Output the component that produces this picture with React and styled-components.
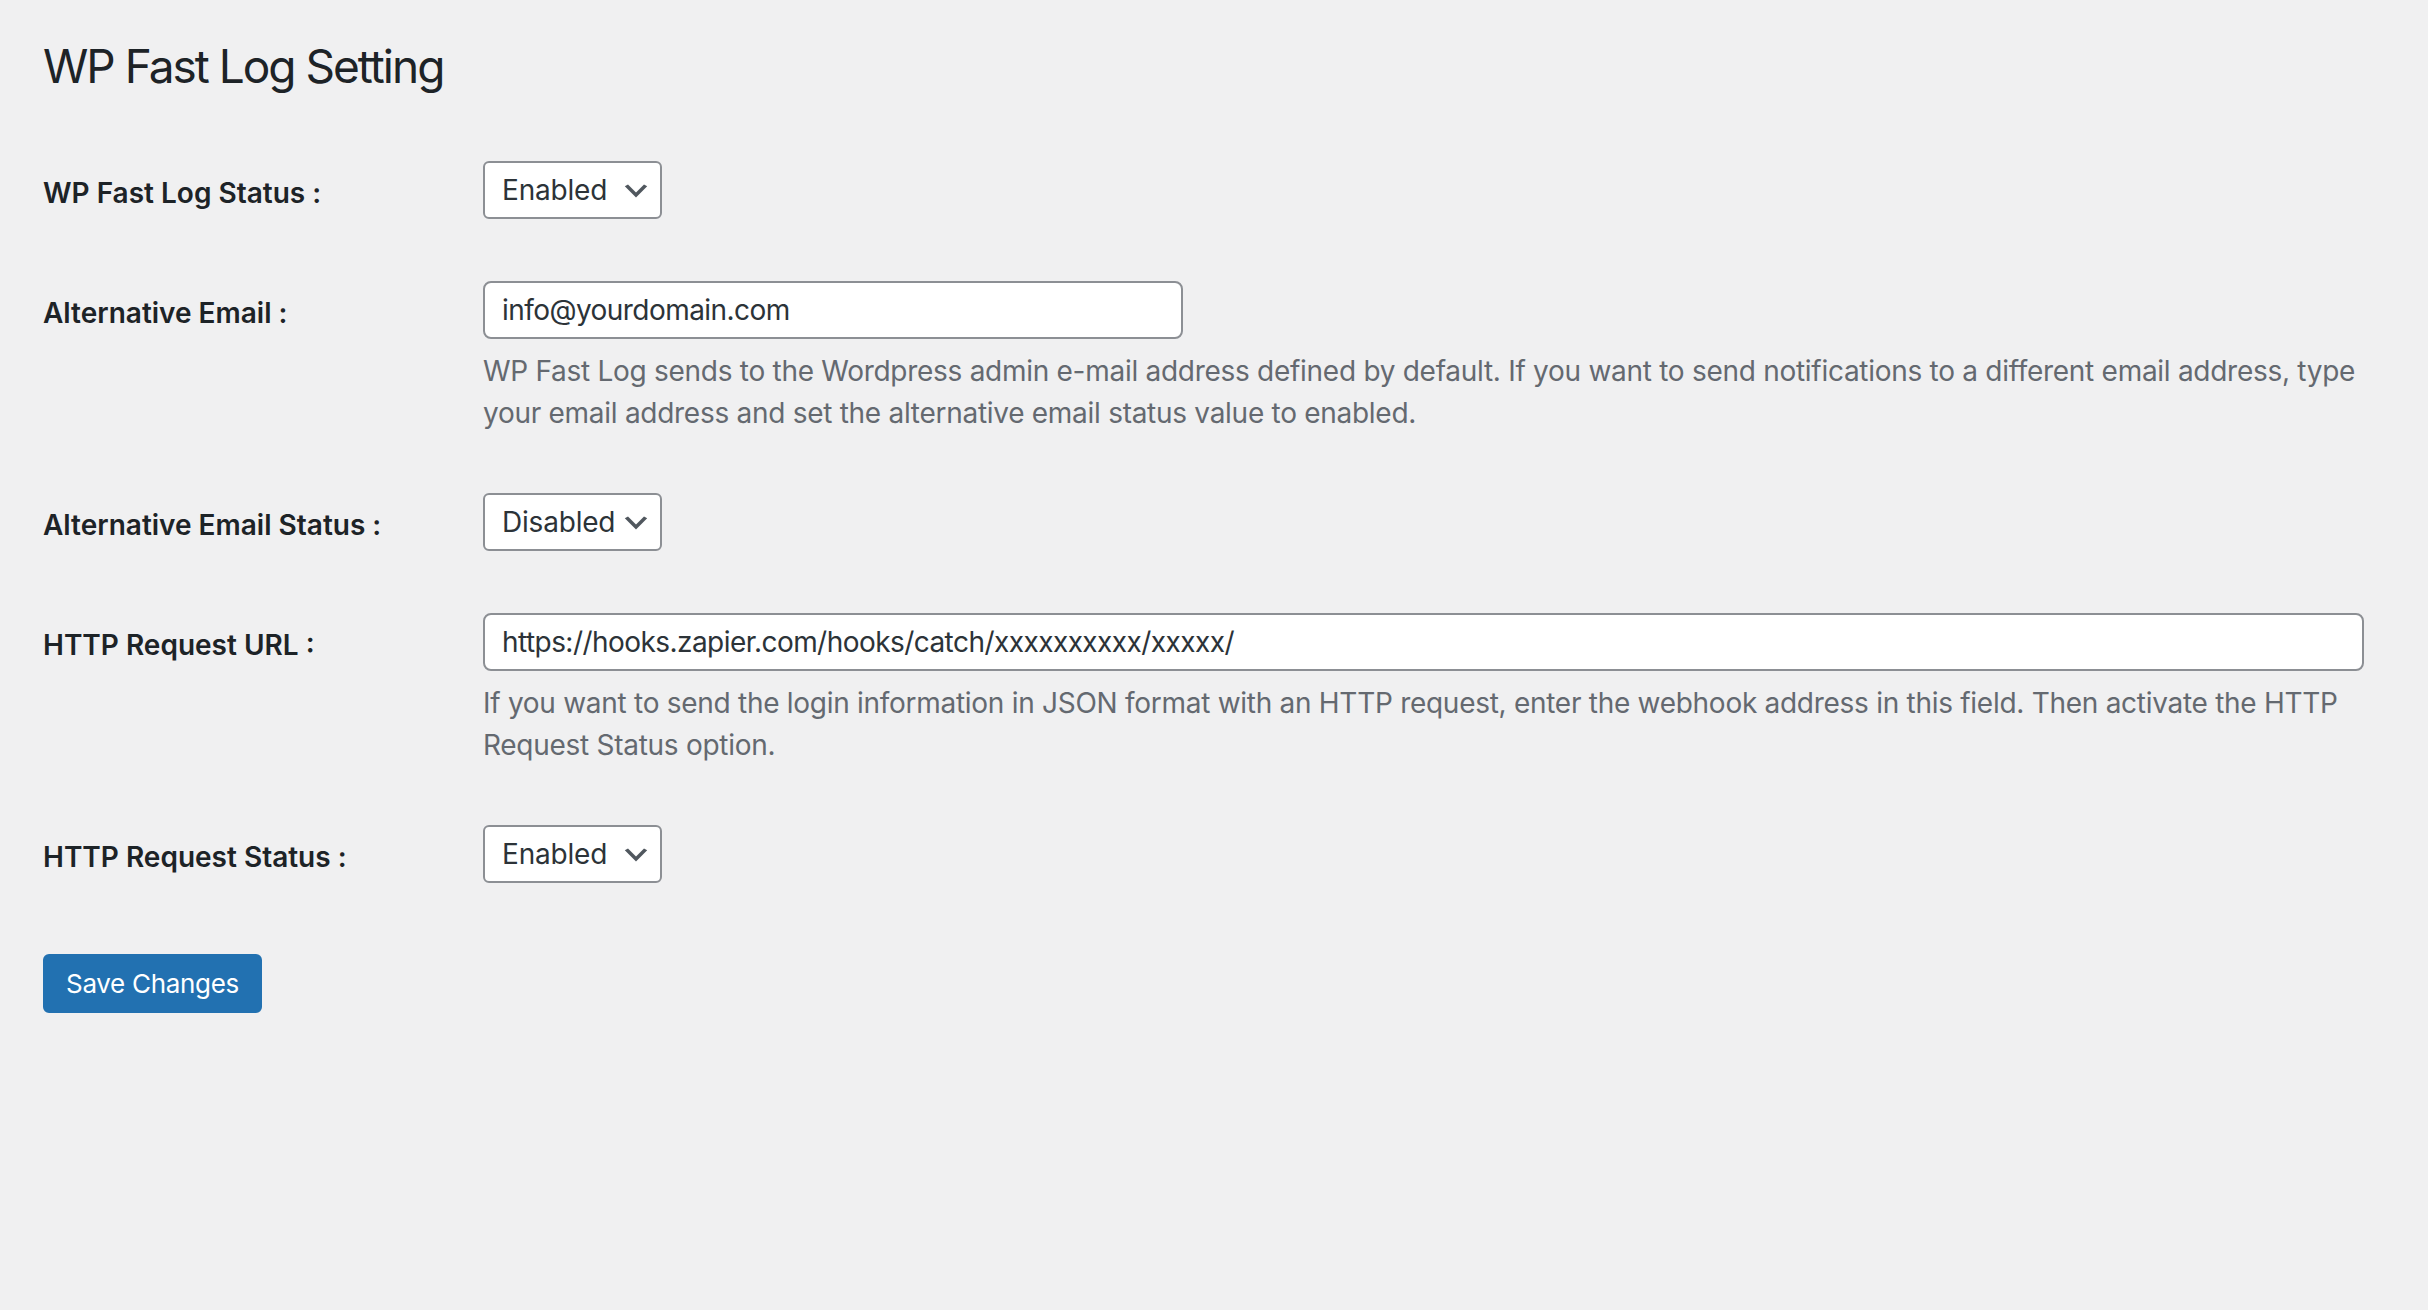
import React from 'react';
import styled, { createGlobalStyle } from 'styled-components';

const GlobalStyle = createGlobalStyle`
  html, body {
    margin: 0;
    padding: 0;
    background: #f0f0f1;
    min-height: 100%;
  }
  body {
    font-family: Inter, "Noto Sans", "Liberation Sans", sans-serif;
    color: #1d2327;
  }
`;

const Wrap = styled.div`
  padding: 37px 25px 0 43px;
  min-height: 1310px;
  box-sizing: border-box;
`;

const PageTitle = styled.h1`
  margin: 0 0 33px;
  font-size: 46px;
  font-weight: 400;
  line-height: 1.3;
  color: #1d2327;
  letter-spacing: -2px;
`;

const FormTable = styled.div`
  display: flex;
  flex-direction: column;
`;

const Row = styled.div`
  display: grid;
  grid-template-columns: 440px 1fr;
`;

const Label = styled.label`
  padding: 45px 40px 0 0;
  font-size: 28px;
  font-weight: 600;
  line-height: 1.3;
  color: #1d2327;
`;

const Field = styled.div`
  padding: 31px 20px 31px 0;
  min-width: 0;
`;

const SelectBox = styled.div`
  display: flex;
  align-items: center;
  justify-content: space-between;
  box-sizing: border-box;
  width: 179px;
  height: 58px;
  padding: 0 8px 0 17px;
  background: #fff;
  border: 2px solid #8c8f94;
  border-radius: 6px;
  font-size: 28px;
  letter-spacing: -0.2px;
  color: #2c3338;
  cursor: pointer;

  svg {
    flex: none;
    width: 32px;
    height: 32px;
    margin-top: 3px;
  }
`;

const TextInput = styled.input`
  display: block;
  box-sizing: border-box;
  width: ${({ $wide }) => ($wide ? '99%' : '700px')};
  height: 58px;
  margin: 0;
  padding: 0 17px;
  background: #fff;
  border: 2px solid #8c8f94;
  border-radius: 8px;
  font-family: inherit;
  font-size: 28px;
  letter-spacing: -0.55px;
  color: #2c3338;
  outline: none;
`;

const Description = styled.p`
  margin: 11px 0 -3px;
  font-size: 28px;
  line-height: 1.5;
  letter-spacing: -0.28px;
  color: #646970;
`;

const Submit = styled.div`
  padding-top: 40px;
`;

const PrimaryButton = styled.button`
  height: 59px;
  padding: 0 21px;
  background: #2271b1;
  border: 2px solid #2271b1;
  border-radius: 6px;
  color: #fff;
  font-family: inherit;
  font-size: 26px;
  font-weight: 400;
  letter-spacing: -0.3px;
  cursor: pointer;
`;

const Chevron = () => (
  <svg viewBox="0 0 20 20" aria-hidden="true">
    <path d="M5 6l5 5 5-5 2 1-7 7-7-7 2-1z" fill="#50575e" />
  </svg>
);

const Select = ({ value }) => (
  <SelectBox role="combobox">
    <span>{value}</span>
    <Chevron />
  </SelectBox>
);

const SettingRow = ({ label, children }) => (
  <Row>
    <Label>{label}</Label>
    <Field>{children}</Field>
  </Row>
);

export default function App() {
  return (
    <Wrap>
      <GlobalStyle />
      <PageTitle>WP Fast Log Setting</PageTitle>
      <FormTable>
        <SettingRow label="WP Fast Log Status :">
          <Select value="Enabled" />
        </SettingRow>
        <SettingRow label="Alternative Email :">
          <TextInput defaultValue="info@yourdomain.com" />
          <Description>
            WP Fast Log sends to the Wordpress admin e-mail address defined by default. If you want to send notifications to a different email address, type your email address and set the alternative email status value to enabled.
          </Description>
        </SettingRow>
        <SettingRow label="Alternative Email Status :">
          <Select value="Disabled" />
        </SettingRow>
        <SettingRow label="HTTP Request URL :">
          <TextInput $wide defaultValue="https://hooks.zapier.com/hooks/catch/xxxxxxxxxx/xxxxx/" />
          <Description>
            If you want to send the login information in JSON format with an HTTP request, enter the webhook address in this field. Then activate the HTTP Request Status option.
          </Description>
        </SettingRow>
        <SettingRow label="HTTP Request Status :">
          <Select value="Enabled" />
        </SettingRow>
      </FormTable>
      <Submit>
        <PrimaryButton type="button">Save Changes</PrimaryButton>
      </Submit>
    </Wrap>
  );
}
